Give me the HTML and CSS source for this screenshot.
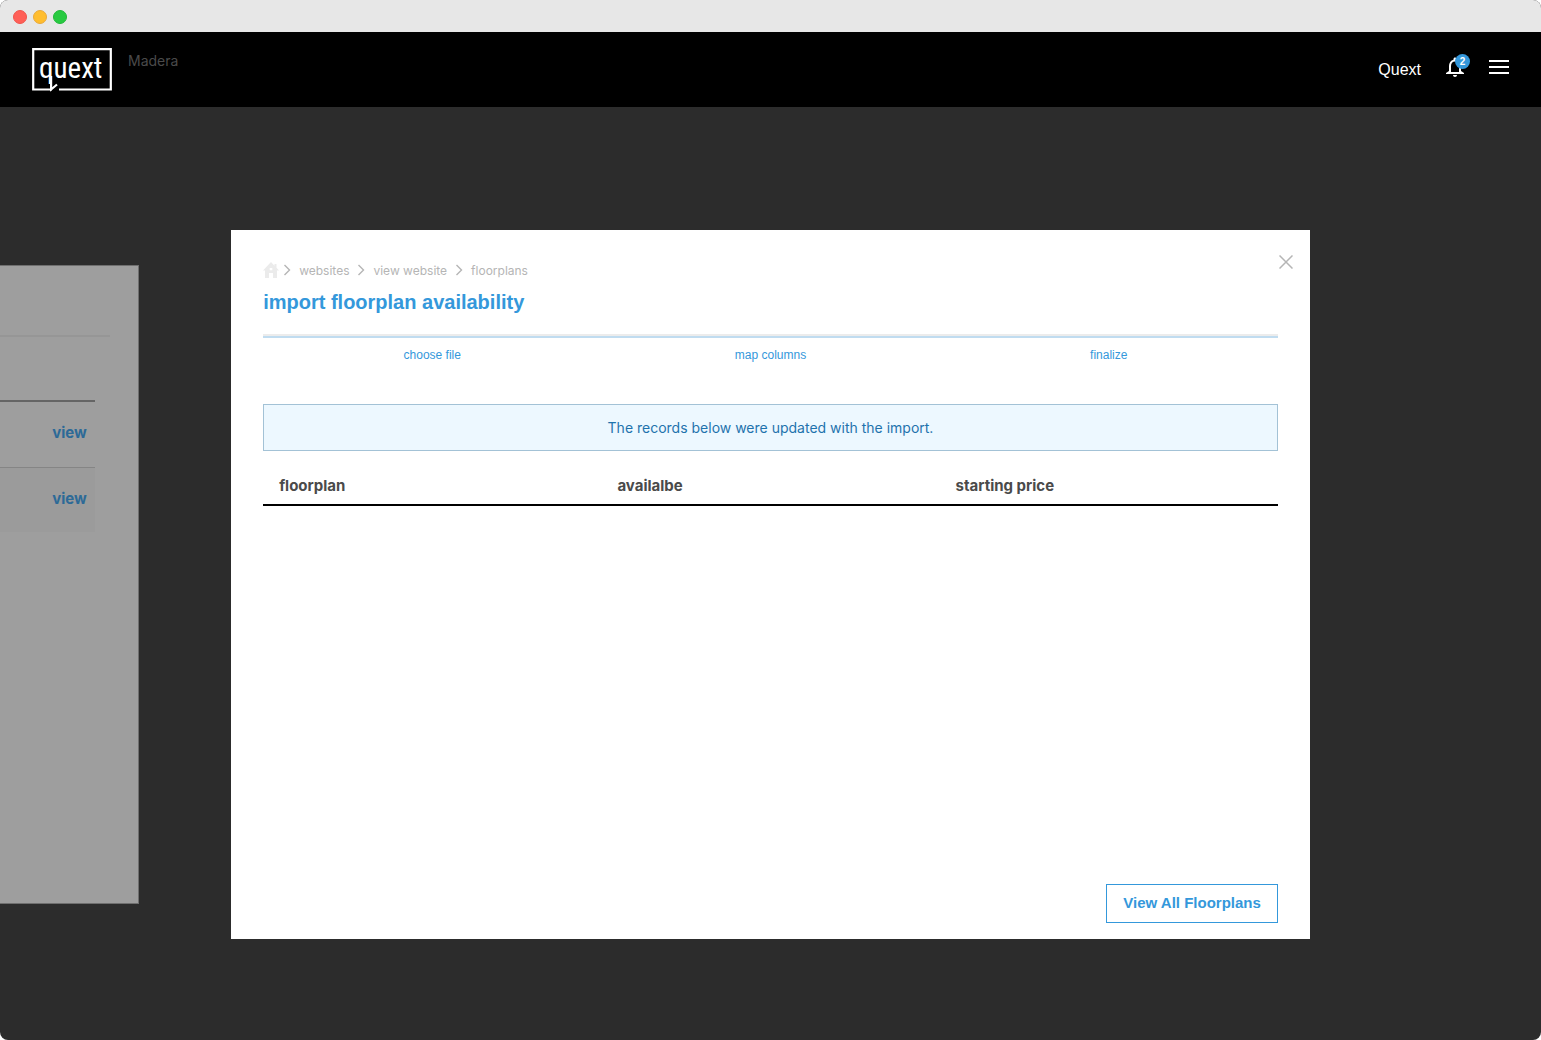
FILE: index.html
```html
<!DOCTYPE html>
<html lang="en">
<head>
<meta charset="utf-8">
<meta name="viewport" content="width=device-width, initial-scale=1">
<title>import floorplan availability</title>
<link rel="stylesheet" href="styles.css">
</head>
<body>
<div class="window">
  <div class="titlebar">
    <span class="dot dot-red"></span>
    <span class="dot dot-amber"></span>
    <span class="dot dot-green"></span>
  </div>
  <header class="topbar">
    <a class="logo" href="#" aria-label="quext">
      <svg width="80" height="43" viewBox="0 0 80 43">
        <path d="M20 41.5H1.200V1.200H78.800V41.500H27" fill="none" stroke="#fff" stroke-width="2.2"/>
        <path d="M19.100 28V41.500L25 36.500" fill="none" stroke="#fff" stroke-width="2.2"/>
        <text x="7" y="30" class="logo-text">quext</text>
      </svg>
    </a>
    <span class="property">Madera</span>
    <nav class="actions">
      <a class="account" href="#">Quext</a>
      <button class="icon-button bell" type="button" aria-label="Notifications">
        <svg width="24" height="24" viewBox="0 0 24 24" fill="#fff"><path d="M12 22c1.100 0 2-.9 2-2h-4c0 1.100.9 2 2 2zm6-6v-5c0-3.070-1.630-5.640-4.500-6.320V4c0-.83-.67-1.500-1.500-1.500s-1.500.67-1.500 1.500v.68C7.640 5.360 6 7.920 6 11v5l-3 2v1h18v-1l-3-2zm-2 1H8v-6c0-2.480 1.510-4.500 4-4.500s4 2.020 4 4.500v6z"/></svg>
        <span class="badge">2</span>
      </button>
      <button class="icon-button" type="button" aria-label="Menu">
        <svg width="20" height="14" viewBox="0 0 20 14" fill="#fff"><path d="M0 0h20v2H0zM0 6h20v2H0zM0 12h20v2H0z"/></svg>
      </button>
    </nav>
  </header>
  <main class="stage">
    <section class="card">
      <div class="card-rule"></div>
      <div class="card-list">
        <a class="card-row" href="#">view</a>
        <a class="card-row card-row-alt" href="#">view</a>
      </div>
    </section>
    <section class="modal" role="dialog" aria-labelledby="title">
      <div class="modal-head">
        <nav class="crumbs" aria-label="Breadcrumb">
          <a href="#" class="home" aria-label="Home"><svg width="16" height="16" viewBox="0 0 16 16"><path d="M8 0L0 8.500H2V16H6V11H10V16H14V8.500H16L13.500 5.800V2H11.500V3.700ZM6.700 6H9.300V8.300H6.700Z" fill="#ebebeb" fill-rule="evenodd"/></svg></a>
          <svg class="chevron" width="8" height="12" viewBox="0 0 8 12"><path d="M1.500 1L6.500 6L1.500 11"/></svg>
          <a href="#">websites</a>
          <svg class="chevron" width="8" height="12" viewBox="0 0 8 12"><path d="M1.500 1L6.500 6L1.500 11"/></svg>
          <a href="#">view website</a>
          <svg class="chevron" width="8" height="12" viewBox="0 0 8 12"><path d="M1.500 1L6.500 6L1.500 11"/></svg>
          <a href="#">floorplans</a>
        </nav>
        <button class="icon-button close" type="button" aria-label="Close">
          <svg width="14" height="14" viewBox="0 0 14 14"><path d="M.5 .5L13.500 13.500M13.500 .5L.5 13.500" stroke="#b5b5b5" stroke-width="1.500"/></svg>
        </button>
      </div>
      <h1 id="title">import floorplan availability</h1>
      <ol class="steps">
        <li>choose file</li>
        <li>map columns</li>
        <li>finalize</li>
      </ol>
      <p class="notice">The records below were updated with the import.</p>
      <table class="records">
        <thead><tr><th scope="col">floorplan</th><th scope="col">availalbe</th><th scope="col">starting price</th></tr></thead>
        <tbody></tbody>
      </table>
      <div class="modal-foot">
        <button class="outline-button" type="button">View All Floorplans</button>
      </div>
    </section>
  </main>
</div>
</body>
</html>
```

FILE: styles.css
```css
* { box-sizing: border-box; }

body {
  margin: 0;
  background: #fff;
  font-family: Inter, sans-serif;
  font-size: 14px;
}

a { color: inherit; text-decoration: none; }

.window {
  display: flex;
  flex-direction: column;
  min-height: 100vh;
  overflow: hidden;
  border-radius: 8px;
  background: #2c2c2c;
}

.titlebar {
  display: flex;
  align-items: center;
  gap: 6px;
  height: 32px;
  padding: 2px 13px 0;
  background: #e7e7e7;
}

.dot { width: 14px; height: 14px; border: 1px solid; border-radius: 50%; }
.dot-red { background: #ff5f57; border-color: #f0544c; }
.dot-amber { background: #ffbd2e; border-color: #e9a93a; }
.dot-green { background: #28ca41; border-color: #20b838; }

.topbar {
  display: flex;
  align-items: flex-start;
  gap: 16px;
  height: 75px;
  padding: 16px 32px;
  background: #000;
}

.logo svg { display: block; overflow: visible; }
.logo-text { font: 29px "Roboto Condensed", "Liberation Sans Narrow", Roboto, sans-serif; fill: #fff; }

.property { padding-top: 4px; line-height: 17px; color: #4a4a4a; }

.actions {
  display: flex;
  align-items: center;
  height: 38px;
  margin-left: auto;
}

.account {
  margin-right: 22px;
  padding-top: 6px;
  color: #fff;
  font: 16px/20px "Liberation Sans", Arial, sans-serif;
}

.icon-button {
  display: block;
  padding: 0;
  border: 0;
  background: none;
}
.icon-button svg { display: block; }

.bell { position: relative; margin-right: 22px; }

.badge {
  position: absolute;
  top: -1px;
  right: -3px;
  width: 15px;
  height: 15px;
  border-radius: 50%;
  background: #3498db;
  color: #fff;
  font-size: 10px;
  font-weight: 700;
  line-height: 15px;
  text-align: center;
}

.stage {
  display: grid;
  grid-template-columns: 9fr 6fr 70fr 15fr;
  align-items: start;
  flex: 1;
  padding: 123px 0 101px;
}

.card {
  min-height: 639px;
  margin-top: 35px;
  padding-top: 69px;
  border: 1px solid #6f6f6f;
  border-left: 0;
  background: #9e9e9e;
}

.card-rule { height: 2px; margin-right: 28px; background: #969696; }

.card-list { margin: 63px 43px 0 0; border-top: 2px solid #656565; }

.card-row {
  display: block;
  height: 66px;
  padding: 0 8px;
  border-bottom: 1px solid #858585;
  color: #2d6a97;
  font-size: 15px;
  font-weight: 700;
  line-height: 62px;
  text-align: right;
}
.card-row-alt { height: 64px; border-bottom: 0; background: #9b9b9b; }

.modal {
  display: flex;
  flex-direction: column;
  grid-column: 3;
  min-height: 709px;
  padding: 25px 32px 16px;
  background: #fff;
}

.modal-head { display: flex; justify-content: space-between; }

.crumbs {
  display: flex;
  align-items: center;
  gap: 8px;
  height: 30px;
  color: #b5b5b5;
  font-size: 12px;
}
.home { margin-right: -4px; }
.home svg { display: block; }
.chevron { fill: none; stroke: #b5b5b5; stroke-width: 1.4; }

.close { margin-right: -15px; height: 14px; }

h1 {
  margin: 5px 0 20px;
  color: #3498db;
  font: 700 20px/24px "Liberation Sans", Arial, sans-serif;
}

.steps {
  display: grid;
  grid-template-columns: repeat(3, 1fr);
  margin: 0;
  padding: 0;
  border-top: 2px solid #ececec;
  list-style: none;
  color: #3498db;
  font: 12px/16px "Liberation Sans", Arial, sans-serif;
  text-align: center;
}
.steps li { padding: 9px 0; border-top: 2px solid #c0dcf0; }

.notice {
  margin: 32px 0 16px;
  padding: 12px 16px;
  border: 1px solid #a3c2d6;
  background: #edf8ff;
  color: #1f73ad;
  line-height: 21px;
  text-align: center;
}

.records { width: 100%; border-collapse: collapse; table-layout: fixed; }
.records th {
  padding: 8px 16px 7px;
  border-bottom: 2px solid #000;
  color: #4a4a4a;
  font-size: 15px;
  line-height: 22px;
  text-align: left;
}

.modal-foot { display: flex; justify-content: flex-end; margin-top: auto; }

.outline-button {
  height: 39px;
  padding: 0 16px 2px;
  border: 1px solid #3498db;
  background: #fff;
  color: #3498db;
  font: 700 15px/20px "Liberation Sans", Arial, sans-serif;
}
```
